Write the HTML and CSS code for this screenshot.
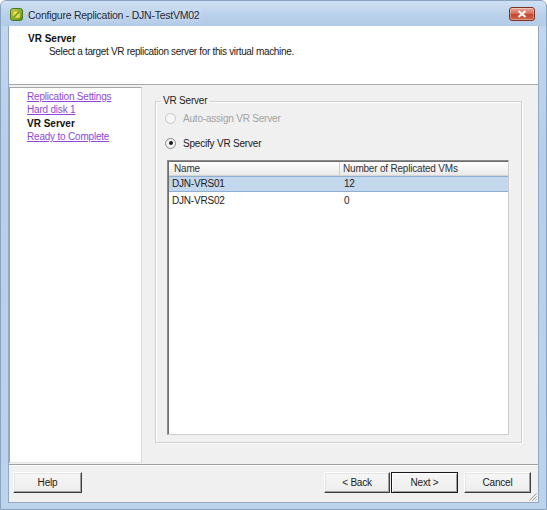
FILE: index.html
```html
<!DOCTYPE html>
<html>
<head>
<meta charset="utf-8">
<title>Configure Replication</title>
<link rel="stylesheet" href="styles.css">
</head>
<body>
<div class="window">
  <div class="titlebar">
    <svg class="app-icon" width="13" height="13" viewBox="0 0 13 13">
      <defs>
        <linearGradient id="g1" x1="0" y1="0" x2="1" y2="1">
          <stop offset="0" stop-color="#b6d65a"/>
          <stop offset="1" stop-color="#4f8d1c"/>
        </linearGradient>
      </defs>
      <rect x="0.5" y="0.5" width="12" height="12" rx="2.5" fill="url(#g1)" stroke="#4a7a1a"/>
      <rect x="3" y="3" width="7" height="7" rx="1.5" fill="#f3dc55" stroke="#c9a22a" stroke-width="0.8"/>
      <path d="M3.5 9.5 L9.5 3.5" stroke="#5b9a22" stroke-width="1.6"/>
    </svg>
    <span class="title">Configure Replication - DJN-TestVM02</span>
    <div class="close-btn">
      <svg width="10" height="8" viewBox="0 0 10 8"><path d="M1.5 1 L8.5 7 M8.5 1 L1.5 7" stroke="#fff" stroke-width="2"/></svg>
    </div>
  </div>
  <div class="client">
    <div class="header">
      <div class="h-title">VR Server</div>
      <div class="h-sub">Select a target VR replication server for this virtual machine.</div>
    </div>
    <div class="main">
      <nav class="steps">
        <a href="#" class="step-link">Replication Settings</a>
        <a href="#" class="step-link">Hard disk 1</a>
        <span class="step-current">VR Server</span>
        <a href="#" class="step-link">Ready to Complete</a>
      </nav>
      <div class="content">
        <fieldset class="group">
          <legend class="group-legend">VR Server</legend>
          <div class="radio disabled"><span class="radio-dot"></span><span>Auto-assign VR Server</span></div>
          <div class="radio checked"><span class="radio-dot"></span><span>Specify VR Server</span></div>
          <div class="list">
            <div class="list-head">
              <div class="col-name">Name</div>
              <div class="col-num">Number of Replicated VMs</div>
            </div>
            <div class="list-row selected">
              <div class="col-name">DJN-VRS01</div>
              <div class="col-num">12</div>
            </div>
            <div class="list-row">
              <div class="col-name">DJN-VRS02</div>
              <div class="col-num">0</div>
            </div>
          </div>
        </fieldset>
      </div>
    </div>
    <div class="footer">
      <button class="btn btn-help">Help</button>
      <div class="spacer"></div>
      <button class="btn btn-back">&lt; Back</button>
      <button class="btn btn-next">Next &gt;</button>
      <button class="btn btn-cancel">Cancel</button>
      <svg class="grip" width="9" height="9" viewBox="0 0 9 9">
        <path d="M8.5 1.5 L1.5 8.5 M8.5 4.5 L4.5 8.5 M8.5 7.5 L7.5 8.5" stroke="#9a9a9a" stroke-width="1"/>
      </svg>
    </div>
  </div>
</div>
</body>
</html>
```
FILE: styles.css
```css
* { box-sizing: border-box; }

html, body {
  margin: 0;
  padding: 0;
  background: #ffffff;
}

body {
  font-family: "Liberation Sans", Arial, sans-serif;
  font-size: 10px;
  letter-spacing: -0.2px;
  color: #1a1a1a;
}

.window {
  width: 547px;
  height: 510px;
  display: flex;
  flex-direction: column;
  background: linear-gradient(to bottom, #c4d8ee 0%, #b6cee9 30%, #bcd3ec 100%);
  border: 1px solid #8aa3c0;
  border-radius: 6px 6px 0 0;
  overflow: hidden;
}

/* ---------- title bar ---------- */
.titlebar {
  height: 25px;
  display: flex;
  align-items: center;
  padding: 2px 0 0 9px;
  background: linear-gradient(to bottom, #cfe0f3 0%, #b9d0ea 60%, #b3cbe7 100%);
}

.app-icon {
  flex: none;
  margin-right: 5px;
}

.title {
  font-family: "Liberation Sans", Arial, sans-serif;
  font-size: 10.5px;
  letter-spacing: -0.25px;
  color: #1e2a38;
  text-shadow: 0 0 6px #eaf2fb;
  flex: 1;
}

.close-btn {
  width: 26px;
  height: 14px;
  margin: -2px 11px 0 0;
  border: 1px solid #7d3024;
  border-radius: 3px;
  background: linear-gradient(to bottom, #e9a89a 0%, #d6705b 45%, #c4462d 55%, #d1664c 100%);
  display: flex;
  align-items: center;
  justify-content: center;
  box-shadow: inset 0 0 0 1px rgba(255,255,255,0.35);
}

/* ---------- client ---------- */
.client {
  flex: 1;
  margin: 0 7px 6px 7px;
  display: flex;
  flex-direction: column;
  background: #f0f0f0;
  border: 1px solid #93a9c3;
  border-top: none;
  position: relative;
}

.header {
  height: 59px;
  background: #ffffff;
  border-bottom: 1px solid #a9a9a9;
  padding: 6px 0 0 19px;
}

.h-title {
  font-weight: bold;
  line-height: 13px;
  letter-spacing: 0;
  color: #111;
}

.h-sub {
  line-height: 13px;
  margin-left: 21px;
  letter-spacing: -0.33px;
  color: #222;
}

.main {
  flex: 1;
  display: flex;
  padding: 2px 0 1px 0;
}

.steps {
  width: 133px;
  background: #ffffff;
  border: 1px solid #a7a7a7;
  border-right-color: #d9d9d9;
  border-bottom-color: #e4e4e4;
  display: flex;
  flex-direction: column;
  align-items: flex-start;
  padding: 2px 0 0 17px;
}

.step-link,
.step-current {
  line-height: 13.3px;
}

.step-link {
  color: #8f48d8;
  text-decoration: underline;
}

.step-current {
  font-weight: bold;
  letter-spacing: 0;
  color: #111;
}

.content {
  flex: 1;
  display: flex;
  flex-direction: column;
  padding: 8px 16px 20px 13px;
}

/* ---------- group box ---------- */
.group {
  flex: 1;
  margin: 0;
  min-width: 0;
  display: flex;
  flex-direction: column;
  border: 1px solid #d0d0d0;
  box-shadow: inset 1px 1px 0 #ffffff, 1px 1px 0 #ffffff;
  padding: 0 12px 7px 9px;
}

.group-legend {
  padding: 0 2px;
  margin-left: -4px;
  line-height: 12px;
  color: #222;
}

.radio {
  display: flex;
  align-items: center;
  height: 16px;
  gap: 7px;
  margin-top: 3px;
}

.radio + .radio {
  margin-top: 9px;
}

.radio-dot {
  width: 11px;
  height: 11px;
  border-radius: 50%;
  flex: none;
  display: flex;
  align-items: center;
  justify-content: center;
}

.radio.disabled {
  color: #a3a3a3;
}

.radio.disabled .radio-dot {
  border: 1px solid #c6c6c6;
  background: #f6f6f6;
}

.radio.checked .radio-dot {
  border: 1px solid #8a8a8a;
  background: radial-gradient(circle at 60% 60%, #ffffff 0%, #e9e9e9 100%);
}

.radio.checked .radio-dot::after {
  content: "";
  width: 4px;
  height: 4px;
  border-radius: 50%;
  background: #1a1a1a;
}

/* ---------- list ---------- */
.list {
  flex: 1;
  margin: 9px 0 0 2px;
  background: #ffffff;
  border: 1px solid #8a8a8a;
  border-right-color: #cfcfcf;
  border-bottom-color: #cfcfcf;
  box-shadow: inset 1px 1px 0 #6e6e6e;
  padding: 1px 0 0 1px;
}

.list-head,
.list-row {
  display: flex;
}

.list-head {
  height: 14px;
  background: linear-gradient(to bottom, #ffffff 0%, #f4f4f4 50%, #e9e9e9 100%);
  border-bottom: 1px solid #d5d5d5;
  color: #333;
  line-height: 13px;
}

.list-head .col-name {
  padding-left: 5px;
  border-right: 1px solid #cfcfcf;
}

.list-row {
  height: 16px;
  line-height: 15px;
  color: #222;
  margin-bottom: 1px;
}

.list-row.selected {
  background: #c2d6ec;
  border-top: 1px solid #8eaed4;
  border-bottom: 1px solid #8eaed4;
  line-height: 14px;
}

.col-name {
  width: 171px;
  padding-left: 3px;
  flex: none;
}

.col-num {
  flex: 1;
  padding-left: 3px;
}

.list-row .col-num {
  padding-left: 4px;
}

/* ---------- footer ---------- */
.footer {
  height: 38px;
  border-top: 1px solid #a0a0a0;
  box-shadow: inset 0 1px 0 #ffffff;
  display: flex;
  align-items: flex-start;
  padding: 7px 7px 0 4px;
}

.spacer {
  flex: 1;
}

.btn {
  height: 21px;
  margin: 0;
  padding: 0;
  font-family: inherit;
  font-size: 10px;
  letter-spacing: -0.2px;
  color: #1a1a1a;
  background: linear-gradient(to bottom, #f6f6f6 0%, #ededed 100%);
  border: 1px solid;
  border-color: #ffffff #3f3f3f #3f3f3f #ffffff;
  box-shadow: inset -1px -1px 0 #a0a0a0, inset 1px 1px 0 #e3e3e3;
}

.btn-help {
  width: 69px;
}

.btn-back {
  width: 66px;
}

.btn-next {
  width: 67px;
  margin-left: 1px;
  border: 1px solid #1a1a1a;
  box-shadow: inset 1px 1px 0 #ffffff, inset -1px -1px 0 #a0a0a0;
}

.btn-cancel {
  width: 67px;
  margin-left: 6px;
}

.grip {
  position: absolute;
  right: 1px;
  bottom: 1px;
}
```
